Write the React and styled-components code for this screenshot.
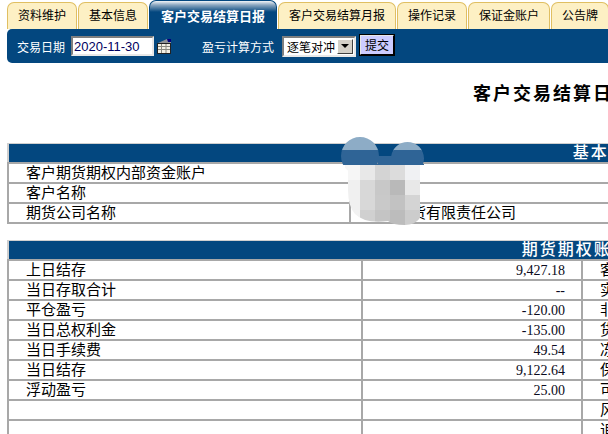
import React from 'react';
import styled, { createGlobalStyle } from 'styled-components';

const GlobalStyle = createGlobalStyle`
  html, body {
    margin: 0;
    padding: 0;
    background: #fff;
    overflow: hidden;
  }
  body {
    font-family: "Liberation Sans", "Noto Sans CJK SC", sans-serif;
    color: #000;
  }
`;

const Page = styled.div`
  position: relative;
  width: 1210px;
  height: 434px;
  overflow: hidden;
`;

const TabRow = styled.div`
  display: flex;
  align-items: flex-end;
  gap: 1px;
  height: 29px;
  padding-left: 7px;
`;

const Tab = styled.div`
  box-sizing: border-box;
  height: ${(p) => (p.$active ? '29px' : '27px')};
  padding: 0 ${(p) => (p.$active ? '11px' : '10px')};
  line-height: ${(p) => (p.$active ? '31px' : '27px')};
  font-size: ${(p) => (p.$active ? '13px' : '12px')};
  font-weight: ${(p) => (p.$active ? 700 : 400)};
  white-space: nowrap;
  border: 1px solid ${(p) => (p.$active ? '#03477f' : '#e0bf62')};
  border-bottom: none;
  border-radius: 7px 7px 0 0;
  color: ${(p) => (p.$active ? '#fff' : '#000')};
  background: ${(p) =>
    p.$active
      ? 'linear-gradient(#f2f5f8 0, #8aa6c0 4px, #03477f 11px)'
      : '#fdf0c4'};
`;

const Toolbar = styled.div`
  display: flex;
  align-items: center;
  height: 34px;
  margin-left: 7px;
  padding-left: 10px;
  background: #03477f;
  border-radius: 5px 0 0 5px;
`;

const ToolLabel = styled.span`
  font-size: 12px;
  color: #fff;
  margin-left: ${(p) => p.$gap || 0}px;
  white-space: nowrap;
`;

const DateInput = styled.input`
  box-sizing: border-box;
  width: 83px;
  height: 20px;
  margin: 0 3px 0 6px;
  padding: 0 1px;
  font-family: "Liberation Sans", sans-serif;
  font-size: 13px;
  color: #000060;
  background: #fff;
  border: 2px solid;
  border-color: #7f7f7f #e8e8e8 #e8e8e8 #7f7f7f;
  outline: none;
`;

const SelectBox = styled.div`
  box-sizing: border-box;
  display: flex;
  align-items: center;
  justify-content: space-between;
  width: 74px;
  height: 21px;
  margin-left: 8px;
  padding: 0 1px 0 3px;
  font-size: 12px;
  background: #fff;
  border: 2px solid;
  border-color: #7f7f7f #e8e8e8 #e8e8e8 #7f7f7f;
`;

const SelectArrow = styled.span`
  box-sizing: border-box;
  display: flex;
  align-items: center;
  justify-content: center;
  width: 16px;
  height: 15px;
  background: #d4d0c8;
  border: 1px solid;
  border-color: #fff #404040 #404040 #fff;

  &::after {
    content: '';
    border-style: solid;
    border-width: 4px 4px 0;
    border-color: #000 transparent transparent;
  }
`;

const SubmitButton = styled.button`
  box-sizing: border-box;
  width: 36px;
  height: 22px;
  margin: -2px 0 0 3px;
  padding: 0;
  font-family: "Noto Sans CJK SC", sans-serif;
  font-size: 12px;
  line-height: 14px;
  color: #000;
  background: #ccccff;
  border: 2px solid;
  border-color: #e8e8e8 #000 #000 #e8e8e8;
  outline: 1px solid #000;
  outline-offset: -1px;
`;

const Title = styled.h1`
  margin: 21px 0 39px;
  padding-left: 473px;
  height: 20px;
  font-size: 18px;
  line-height: 20px;
  font-weight: 700;
  letter-spacing: 2px;
  white-space: nowrap;
`;

const SectionTable = styled.table`
  width: 1202px;
  margin: 0 0 ${(p) => p.$after || 0}px 7px;
  border-collapse: collapse;
  table-layout: fixed;
  font-size: 15px;
`;

const HeadCell = styled.th`
  height: 18px;
  padding: 0 0 0 ${(p) => p.$shift || 0}px;
  background: #03477f;
  border: 1px solid #cfcfcf;
  border-bottom: 2px solid #a8a8a8;
  border-left: 2px solid #cfcfcf;
  color: #fff;
  font-size: 16px;
  font-weight: 500;
  line-height: 18px;
  letter-spacing: 2px;
  text-align: center;
`;

const Cell = styled.td`
  box-sizing: border-box;
  height: 20px;
  padding: ${(p) => (p.$num ? '2px 16px 0 0' : `0 0 2px ${p.$pad ?? 17}px`)};
  border: 2px solid #a8a8a8;
  font-family: ${(p) =>
    p.$num ? '"Liberation Serif", serif' : '"Noto Sans CJK SC", sans-serif'};
  font-size: ${(p) => (p.$num ? '14px' : '15px')};
  line-height: 16px;
  color: ${(p) => (p.$num ? '#0a0a20' : '#000')};
  text-align: ${(p) => (p.$num ? 'right' : 'left')};
  white-space: nowrap;
`;

const Mosaic = styled.svg`
  position: absolute;
  left: 341px;
  top: 137px;
`;

const CalendarIcon = () => (
  <svg width="15" height="16" viewBox="0 0 15 16">
    <path d="M1 5 L10 1 L14 1 L14 5 Z" fill="#8f9296" />
    <path d="M10 1 H14 V4 H11 Z" fill="#000080" />
    <rect x="0.5" y="5.5" width="13" height="10" fill="#f4f0e4" stroke="#222" />
    <path d="M4.5 6 V15 M9 6 V15 M1 8.5 H13 M1 11.5 H13" stroke="#8a8a80" />
  </svg>
);

const blockColors = [
  ['#f6f6f6', '#e8e8e8', '#d4d4d4', '#dcdcdc', '#f0f1f3'],
  ['#f0f0f0', '#d8d8d8', '#c8c8c8', '#b9b9b9', '#e8e8e8'],
  ['#f0f0f0', '#d8d8d8', '#c9c9c9', '#c2c2c2', '#d4d4d4'],
  ['#f2f2f2', '#d0d0d0', '#c4c4c4', '#bcbcbc', '#cccccc'],
];

// pale ears over the page, darker where they cross the navy band, then pixel blocks
const MosaicPatch = () => (
  <Mosaic width="90" height="92" viewBox="341 137 90 92">
    <defs>
      <clipPath id="mouse">
        <circle cx="360" cy="156" r="19" />
        <circle cx="407.5" cy="158.5" r="16.5" />
        <rect x="378" y="156" width="14" height="12" />
        <path d="M348 164 H424 V200 Q424 225 405 225 Q392 225 388 221 Q365 224 355 214 Q348 206 348 190 Z" />
      </clipPath>
    </defs>
    <g clipPath="url(#mouse)">
      <rect x="341" y="137" width="90" height="14" fill="#8dacc6" />
      <rect x="341" y="150" width="90" height="15" fill="#2f6496" />
      {blockColors.map((row, r) =>
        row.map((color, c) => (
          <rect
            key={`${r}-${c}`}
            x={345 + c * 15}
            y={165 + r * 15}
            width="15"
            height="15"
            fill={color}
          />
        ))
      )}
    </g>
  </Mosaic>
);

const tabs = [
  { label: '资料维护' },
  { label: '基本信息' },
  { label: '客户交易结算日报', active: true },
  { label: '客户交易结算月报' },
  { label: '操作记录' },
  { label: '保证金账户' },
  { label: '公告牌' },
];

const accountRows = [
  { name: '上日结存', value: '9,427.18', side: '客户权益' },
  { name: '当日存取合计', value: '--', side: '实有货币资金' },
  { name: '平仓盈亏', value: '-120.00', side: '非货币充抵金额' },
  { name: '当日总权利金', value: '-135.00', side: '货币充抵保证金' },
  { name: '当日手续费', value: '49.54', side: '冻结资金' },
  { name: '当日结存', value: '9,122.64', side: '保证金占用' },
  { name: '浮动盈亏', value: '25.00', side: '可用资金' },
  { name: '', value: '', side: '风险度' },
  { name: '', value: '', side: '追加保证金' },
];

const App = () => {
  return (
    <Page>
      <GlobalStyle />
      <TabRow>
        {tabs.map((tab) => (
          <Tab key={tab.label} $active={tab.active}>
            {tab.label}
          </Tab>
        ))}
      </TabRow>
      <Toolbar>
        <ToolLabel>交易日期</ToolLabel>
        <DateInput type="text" value="2020-11-30" readOnly />
        <CalendarIcon />
        <ToolLabel $gap={30}>盈亏计算方式</ToolLabel>
        <SelectBox>
          逐笔对冲
          <SelectArrow />
        </SelectBox>
        <SubmitButton type="button">提交</SubmitButton>
      </Toolbar>

      <Title>客户交易结算日报</Title>

      <SectionTable $after={16}>
        <colgroup>
          <col style={{ width: 342 }} />
          <col />
        </colgroup>
        <thead>
          <tr>
            <HeadCell colSpan={2} $shift={1}>基本资料</HeadCell>
          </tr>
        </thead>
        <tbody>
          <tr>
            <Cell>客户期货期权内部资金账户</Cell>
            <Cell />
          </tr>
          <tr>
            <Cell>客户名称</Cell>
            <Cell />
          </tr>
          <tr>
            <Cell>期货公司名称</Cell>
            <Cell $pad={45}>期货有限责任公司</Cell>
          </tr>
        </tbody>
      </SectionTable>

      <SectionTable>
        <colgroup>
          <col style={{ width: 354 }} />
          <col style={{ width: 220 }} />
          <col />
        </colgroup>
        <thead>
          <tr>
            <HeadCell colSpan={3} $shift={7}>期货期权账户资金状况</HeadCell>
          </tr>
        </thead>
        <tbody>
          {accountRows.map((row) => (
            <tr key={row.side}>
              <Cell>{row.name}</Cell>
              <Cell $num>{row.value}</Cell>
              <Cell>{row.side}</Cell>
            </tr>
          ))}
        </tbody>
      </SectionTable>

      <MosaicPatch />
    </Page>
  );
};

export default App;
